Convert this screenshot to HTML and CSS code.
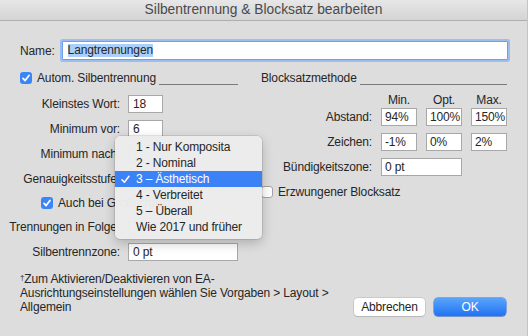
FILE: index.html
```html
<!DOCTYPE html>
<html lang="de">
<head>
  <meta charset="UTF-8" />
  <title>Silbentrennung &amp; Blocksatz bearbeiten</title>
  <link rel="stylesheet" href="styles.css">
</head>
<body>

<div class="window">
  <div class="titlebar">Silbentrennung &amp; Blocksatz bearbeiten</div>

  <div class="name-row">
    <span class="name-label">Name:</span>
    <div class="name-field"><span class="selection">Langtrennungen</span></div>
  </div>

  <div class="columns">
    <div class="col-left">
      <div class="group-head">
        <span class="checkbox checked">
          <svg width="12" height="12" viewBox="0 0 12 12"><path d="M3 6.4 L5.1 8.5 L9 3.5" /></svg>
        </span>
        <span>Autom. Silbentrennung</span>
        <span class="rule"></span>
      </div>

      <div class="left-form">
        <span class="label">Kleinstes Wort:</span><span class="field small">18</span>
        <span class="label">Minimum vor:</span><span class="field small">6</span>
        <span class="label">Minimum nach:</span><span class="field small"></span>
        <span class="label">Genauigkeitsstufe:</span><span class="popup"></span>
        <div class="check-row">
          <span class="checkbox checked">
            <svg width="12" height="12" viewBox="0 0 12 12"><path d="M3 6.4 L5.1 8.5 L9 3.5" /></svg>
          </span>
          <span>Auch bei Großschreibung</span>
        </div>
        <span class="label">Trennungen in Folge:</span><span class="field small"></span>
        <span class="label">Silbentrennzone:</span><span class="field wide">0 pt</span>
      </div>
    </div>

    <div class="col-right">
      <div class="group-head">
        <span>Blocksatzmethode</span>
        <span class="rule"></span>
      </div>

      <div class="col-heads">
        <span>Min.</span>
        <span>Opt.</span>
        <span>Max.</span>
      </div>

      <div class="right-form">
        <span class="label">Abstand:</span>
        <span class="field">94%</span>
        <span class="field">100%</span>
        <span class="field">150%</span>
        <span class="label">Zeichen:</span>
        <span class="field">-1%</span>
        <span class="field">0%</span>
        <span class="field">2%</span>
        <span class="label">Bündigkeitszone:</span>
        <span class="field span2">0 pt</span>
      </div>

      <div class="force-row">
        <span class="checkbox"></span>
        <span>Erzwungener Blocksatz</span>
      </div>
    </div>
  </div>

  <div class="footer">
    <p class="note"><span class="dagger">†</span>Zum Aktivieren/Deaktivieren von EA-<br>Ausrichtungseinstellungen wählen Sie Vorgaben &gt; Layout &gt;<br>Allgemein</p>
    <div class="buttons">
      <button class="btn cancel-btn">Abbrechen</button>
      <button class="btn ok-btn">OK</button>
    </div>
  </div>

  <!-- open popup menu of Genauigkeitsstufe -->
  <ul class="menu">
    <li>1 - Nur Komposita</li>
    <li>2 - Nominal</li>
    <li class="selected">
      <svg class="tick" width="9" height="9" viewBox="0 0 9 9"><path d="M1 4.8 L3.4 7.3 L8 1.3" /></svg>
      3 – Ästhetisch
    </li>
    <li>4 - Verbreitet</li>
    <li>5 – Überall</li>
    <li>Wie 2017 und früher</li>
  </ul>
</div>

</body>
</html>
```

FILE: styles.css
```css
* { box-sizing: border-box; margin: 0; padding: 0; }

body {
  font-family: 'Liberation Sans', Arial, sans-serif;
  font-size: 12px;
  letter-spacing: -0.15px;
  color: #262626;
  background: #dcdcdc;
}

.window {
  position: relative;
  width: 528px;
  height: 336px;
  background: #dddddd;
  border-right: 1px solid #c4c4c4;
  overflow: hidden;
}

.titlebar {
  height: 21px;
  line-height: 20px;
  text-align: center;
  font-size: 13.8px;
  letter-spacing: 0;
  color: #4a4a4a;
  background: linear-gradient(#e7e7e7, #d4d4d4);
  border-bottom: 1px solid #aeaeae;
}

.name-row {
  display: flex;
  align-items: center;
  gap: 7px;
  margin-top: 20px;
  padding: 0 19px 0 20px;
}

.name-field {
  flex: 1;
  height: 19px;
  padding: 1px 5px;
  background: #fff;
  border: 1px solid #6f9fe6;
  box-shadow: 0 0 0 2px #9bbdf0;
  border-radius: 1px;
}

.selection {
  display: inline-block;
  height: 13px;
  line-height: 13px;
  background: #abcffb;
}

.columns {
  display: flex;
  gap: 21px;
  margin-top: 11px;
}

.col-left { width: 240px; }
.col-right { width: 246px; }

.group-head {
  display: flex;
  align-items: center;
  gap: 5px;
  height: 14px;
}

.col-left .group-head {
  margin-left: 20px;
  margin-right: 2px;
}

.rule {
  flex: 1;
  align-self: flex-end;
  margin-left: -2px;
  border-bottom: 1px solid #7a7a7a;
}

.checkbox {
  width: 12px;
  height: 12px;
  flex: none;
  border-radius: 3px;
  background: #fff;
  border: 1px solid #a3a3a3;
  display: flex;
}

.checkbox.checked {
  background: #3a86f7;
  border: none;
}

.checkbox svg path {
  fill: none;
  stroke: #fff;
  stroke-width: 1.8;
  stroke-linecap: round;
  stroke-linejoin: round;
}

.left-form {
  display: grid;
  grid-template-columns: 120px 1fr;
  grid-template-rows: 18px 18px 18px 18px 16px 18px 18px;
  column-gap: 8px;
  row-gap: 7px;
  margin-top: 10px;
}

.label {
  text-align: right;
  line-height: 18px;
  white-space: nowrap;
}

.field {
  height: 18px;
  line-height: 16px;
  padding-left: 4px;
  background: #fff;
  border: 1px solid #a8a8a8;
}

.field.small { width: 35px; }
.field.wide { width: 110px; }

.popup {
  width: 110px;
  height: 18px;
  background: #fff;
  border-radius: 4px;
}

.check-row {
  grid-column: 1 / -1;
  display: flex;
  align-items: center;
  gap: 5px;
  padding-left: 41px;
}

.col-heads {
  display: flex;
  gap: 9px;
  margin: 8px 0 0 120px;
  height: 14px;
  line-height: 14px;
}

.col-heads span {
  width: 36px;
  text-align: center;
}

.right-form {
  display: grid;
  grid-template-columns: 111px 36px 36px 36px;
  grid-auto-rows: 18px;
  column-gap: 9px;
  row-gap: 7px;
  margin-top: 1px;
}

.right-form .field { padding-left: 3px; }
.span2 { grid-column: span 2; }

.force-row {
  display: flex;
  align-items: center;
  gap: 5px;
  height: 14px;
  margin-top: 9px;
}

.footer {
  display: flex;
  justify-content: space-between;
  align-items: flex-start;
  margin-top: 10px;
  padding: 0 21px 0 20px;
}

.note {
  line-height: 14px;
  white-space: nowrap;
}

.dagger {
  font-size: 8px;
  vertical-align: 3px;
}

.buttons {
  display: flex;
  gap: 9px;
  margin-top: 27px;
}

.btn {
  height: 18px;
  font-family: 'Liberation Sans', Arial, sans-serif;
  font-size: 12px;
  letter-spacing: -0.15px;
  border: none;
  border-radius: 4px;
}

.cancel-btn {
  width: 71px;
  background: #fff;
  color: #262626;
  box-shadow: 0 0 0 0.5px #b5b5b5, 0 1px 1px rgba(0, 0, 0, 0.15);
}

.ok-btn {
  width: 72px;
  color: #fff;
  background: linear-gradient(#5aa5fb, #2172f3);
  box-shadow: 0 0 0 0.5px #2a6fd8, 0 1px 1px rgba(0, 0, 0, 0.15);
}

.menu {
  position: absolute;
  left: 115px;
  top: 136px;
  width: 147px;
  padding: 3px 0 4px;
  list-style: none;
  background: rgba(236, 236, 236, 0.98);
  border-radius: 5px;
  box-shadow: 0 0 0 0.5px rgba(0, 0, 0, 0.18), 0 4px 12px rgba(0, 0, 0, 0.22);
}

.menu li {
  position: relative;
  height: 16px;
  line-height: 16px;
  padding-left: 21px;
  white-space: nowrap;
}

.menu li.selected {
  background: #3b82f6;
  color: #fff;
}

.tick {
  position: absolute;
  left: 6px;
  top: 4px;
}

.tick path {
  fill: none;
  stroke: #fff;
  stroke-width: 1.5;
  stroke-linecap: round;
  stroke-linejoin: round;
}
```
